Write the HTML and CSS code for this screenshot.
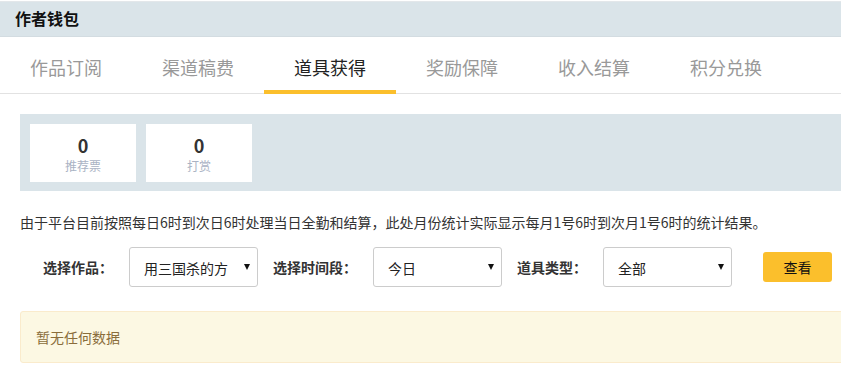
FILE: index.html
```html
<!DOCTYPE html>
<html lang="zh-CN">
<head>
    <meta charset="UTF-8">
    <meta name="viewport" content="width=device-width, initial-scale=1.0">
    <title>作者钱包</title>
    <link rel="stylesheet" href="styles.css">
</head>
<body>
    <div class="wallet-head">作者钱包</div>

    <ul class="tabs">
        <li class="tab">作品订阅</li>
        <li class="tab">渠道稿费</li>
        <li class="tab active">道具获得</li>
        <li class="tab">奖励保障</li>
        <li class="tab">收入结算</li>
        <li class="tab">积分兑换</li>
    </ul>

    <div class="content">
        <div class="stats">
            <div class="stat">
                <div class="stat-num">0</div>
                <div class="stat-label">推荐票</div>
            </div>
            <div class="stat">
                <div class="stat-num">0</div>
                <div class="stat-label">打赏</div>
            </div>
        </div>

        <p class="notice">由于平台目前按照每日6时到次日6时处理当日全勤和结算，此处月份统计实际显示每月1号6时到次月1号6时的统计结果。</p>

        <div class="filters">
            <span class="label first">选择作品：</span>
            <div class="select"><span class="select-text">用三国杀的方式打开三国</span><span class="arrow"></span></div>
            <span class="label">选择时间段：</span>
            <div class="select"><span class="select-text">今日</span><span class="arrow"></span></div>
            <span class="label">道具类型：</span>
            <div class="select"><span class="select-text">全部</span><span class="arrow"></span></div>
            <button class="btn-view">查看</button>
        </div>

        <div class="empty">暂无任何数据</div>
    </div>
</body>
</html>
```

FILE: styles.css
```css
html, body {
    margin: 0;
    overflow: hidden;
}
body {
    font-family: "Noto Sans CJK SC", "Liberation Sans", sans-serif;
    color: #333;
    background: #fff;
}
.wallet-head {
    margin-top: 1px;
    border-top: 1px solid #e3e7ea;
    border-bottom: 1px solid #d3dce1;
    background: #dae4e9;
    height: 34px;
    line-height: 33px;
    padding-left: 15px;
    font-size: 16px;
    font-weight: bold;
    color: #111;
}
.tabs {
    display: flex;
    list-style: none;
    margin: 0;
    padding: 0;
    height: 56px;
    border-bottom: 1px solid #e2e2e2;
}
.tab {
    width: 132px;
    height: 53px;
    line-height: 60px;
    text-align: center;
    font-size: 18px;
    color: #999;
    border-bottom: 4px solid transparent;
}
.tab.active {
    color: #222;
    border-bottom-color: #fbbf2c;
}
.content {
    width: 900px;
    padding: 20px 0 0 20px;
}
.stats {
    display: flex;
    gap: 10px;
    background: #dae4e9;
    padding: 10px;
    height: 57px;
}
.stat {
    width: 106px;
    height: 58px;
    background: #fff;
    text-align: center;
    box-sizing: border-box;
    padding-top: 10px;
}
.stat-num {
    font-size: 18px;
    font-weight: bold;
    line-height: 22px;
    color: #333;
}
.stat-label {
    font-size: 12px;
    line-height: 20px;
    color: #aab3c4;
}
.notice {
    margin: 21px 0 0;
    font-size: 14px;
    line-height: 20px;
    color: #333;
}
.filters {
    display: flex;
    align-items: center;
    margin-top: 15px;
    height: 40px;
}
.label {
    padding: 0 16px 0 15px;
    font-size: 14px;
    font-weight: bold;
    color: #333;
}
.label.first {
    padding-left: 23px;
}
.select {
    display: flex;
    align-items: center;
    width: 129px;
    height: 40px;
    box-sizing: border-box;
    border: 1px solid #ccc;
    border-radius: 3px;
    padding: 0 7px 0 14px;
    font-size: 14px;
    color: #222;
}
.select-text {
    flex: 1;
    overflow: hidden;
    white-space: nowrap;
    margin-right: 16px;
    padding-top: 2px;
}
.arrow {
    width: 0;
    height: 0;
    border-left: 3px solid transparent;
    border-right: 3px solid transparent;
    border-top: 6px solid #111;
}
.btn-view {
    margin-left: 31px;
    width: 69px;
    height: 30px;
    border: none;
    border-radius: 3px;
    background: #fbbf2c;
    font-family: inherit;
    font-size: 14px;
    color: #111;
}
.empty {
    margin-top: 24px;
    height: 52px;
    box-sizing: border-box;
    line-height: 50px;
    padding-left: 15px;
    background: #fcf8e3;
    border: 1px solid #faebcc;
    border-radius: 3px;
    font-size: 14px;
    color: #8a6d3b;
}
```
